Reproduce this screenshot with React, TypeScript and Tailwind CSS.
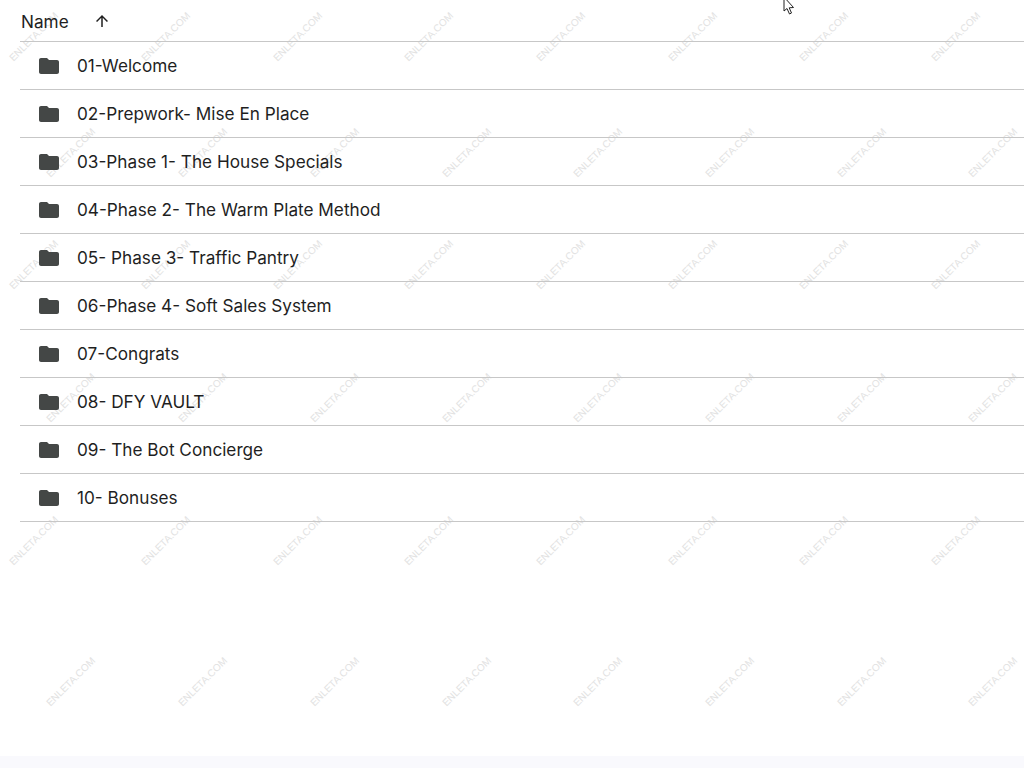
const rows = [
  "01-Welcome",
  "02-Prepwork- Mise En Place",
  "03-Phase 1- The House Specials",
  "04-Phase 2- The Warm Plate Method",
  "05- Phase 3- Traffic Pantry",
  "06-Phase 4- Soft Sales System",
  "07-Congrats",
  "08- DFY VAULT",
  "09- The Bot Concierge",
  "10- Bonuses",
];

const xsA = [34, 166, 298, 429, 561, 693, 824, 956];
const xsB = [71, 203, 335, 467, 598, 730, 862, 993];
const marks: [number, number][] = [
  ...xsA.map((x): [number, number] => [x, 37]),
  ...xsB.map((x): [number, number] => [x, 153]),
  ...xsA.map((x): [number, number] => [x, 265]),
  ...xsB.map((x): [number, number] => [x, 398]),
  ...xsA.map((x): [number, number] => [x, 541]),
  ...xsB.map((x): [number, number] => [x, 682]),
];

function Folder() {
  return (
    <svg width="24" height="24" viewBox="0 0 24 24" className="shrink-0" fill="#444746">
      <path d="M10 4H4c-1.1 0-2 .9-2 2v12c0 1.1.9 2 2 2h16c1.1 0 2-.9 2-2V8c0-1.1-.9-2-2-2h-8l-2-2z" />
    </svg>
  );
}

export default function App() {
  return (
    <div className="relative w-[1024px] h-[768px] overflow-hidden bg-white font-['Inter','Roboto',sans-serif] text-[#1f1f1f]">
      {marks.map(([x, y]) => (
        <span
          key={`${x}-${y}`}
          className="absolute text-[10px] leading-none whitespace-nowrap text-[#e2e2e2] font-['Liberation_Sans',sans-serif] -rotate-45 -translate-x-1/2 -translate-y-1/2"
          style={{ left: x, top: y }}
        >
          ENLETA.COM
        </span>
      ))}

      <div className="relative pl-5">
        <div className="h-[42px] flex items-center border-b border-[#c7c7c7]">
          <span className="ml-px w-[72px] pt-[3px] text-[17.2px] font-[430] leading-none">Name</span>
          <svg width="18" height="18" viewBox="0 0 24 24" fill="#1f1f1f">
            <path d="M4 12l1.41 1.41L11 7.83V20h2V7.83l5.58 5.59L20 12l-8-8-8 8z" />
          </svg>
        </div>
        {rows.map((r) => (
          <div key={r} className="h-12 flex items-center pl-[17px] gap-4 border-b border-[#c7c7c7]">
            <Folder />
            <span className="pt-px text-[17.2px] font-[430] whitespace-nowrap">{r}</span>
          </div>
        ))}
      </div>

      <svg className="absolute left-[783px] top-0" width="14" height="16" viewBox="0 0 14 16">
        <path d="M1 -3 L1 11 L4 8.5 L6.5 14 L8.5 13 L6.2 7.8 L10.5 7.5 Z" fill="#fff" stroke="#222" strokeWidth="1" />
      </svg>

      <div className="absolute left-0 right-0 bottom-0 h-3 bg-[#f9f9fd]" />
    </div>
  );
}
